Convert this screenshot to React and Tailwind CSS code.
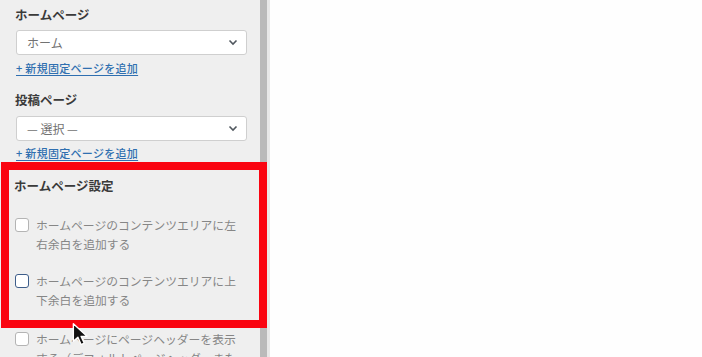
import React from 'react';

const jp = { fontFamily: '"Noto Sans CJK JP", "Noto Sans", sans-serif' };

function Chevron() {
  return (
    <svg width="10" height="7" viewBox="0 0 10 7" className="shrink-0">
      <path d="M1.5 1.5 L5 5 L8.5 1.5" fill="none" stroke="#50575e" strokeWidth="1.6" />
    </svg>
  );
}

function Select({ value, className }) {
  return (
    <div className={`h-[25px] w-[231px] rounded-[3px] border border-[#cfcfcf] bg-white flex items-center justify-between pl-[10px] pr-[8px] ${className}`}>
      <span className="text-[12px] text-[#727272] leading-none">{value}</span>
      <Chevron />
    </div>
  );
}

function AddLink({ className }) {
  return (
    <div className={`h-[16px] text-[11px] leading-[16px] font-medium tracking-[0.3px] text-[#2f6fb0] underline underline-offset-2 ${className}`}>
      + 新規固定ページを追加
    </div>
  );
}

function Check({ focused, children, className }) {
  return (
    <div className={`flex items-start gap-[7px] ${className}`}>
      <div
        className={`mt-[3px] h-[14px] w-[14px] shrink-0 rounded-[3px] bg-white border ${
          focused ? 'border-[#3d5d8a] border-[1.5px]' : 'border-[#b4b4b4]'
        }`}
      />
      <p className="w-[211px] text-[11.8px] leading-[19px] text-[#868686]">{children}</p>
    </div>
  );
}

export default function App() {
  return (
    <div className="relative flex h-[357px] w-[702px] overflow-hidden bg-[#fefefe]" style={jp}>
      <div className="w-[260px] shrink-0 bg-[#efefef] pl-[16px] pt-[6px]">
        <h3 className="h-[18px] text-[12.5px] leading-[18px] font-bold text-[#3a3a3a] -ml-[1px]">ホームページ</h3>
        <Select value="ホーム" className="mt-[6px]" />
        <AddLink className="mt-[5px]" />

        <h3 className="mt-[15px] h-[18px] text-[12.5px] leading-[18px] font-bold text-[#3a3a3a] -ml-[1px]">投稿ページ</h3>
        <Select value="— 選択 —" className="mt-[7px]" />
        <AddLink className="mt-[4px]" />

        <h3 className="mt-[16px] h-[18px] text-[12.5px] leading-[18px] font-bold text-[#3a3a3a] -ml-[2px]">ホームページ設定</h3>
        <Check className="mt-[20px] -ml-[1px]">ホームページのコンテンツエリアに左右余白を追加する</Check>
        <Check focused className="mt-[18px] -ml-[1px]">ホームページのコンテンツエリアに上下余白を追加する</Check>
        <Check className="mt-[20px] -ml-[1px]">ホームページにページヘッダーを表示する（デフォルトページヘッダーまたはカスタムヘッダー）</Check>
      </div>
      <div className="w-[7px] shrink-0 bg-[#bababa]" />
      <div className="w-[3px] shrink-0 bg-[#e8e8e8]" />
      <div className="flex-1" />

      {/* annotation frame */}
      <div className="pointer-events-none absolute left-[1px] top-[162px] h-[166px] w-[266px] border-[8px] border-[#fa0410]" />

      {/* mouse cursor */}
      <svg className="absolute left-[72px] top-[322px]" width="20" height="26" viewBox="0 0 22 28">
        <path
          d="M1.5 1.5 L1.5 21 L6.5 16.5 L10 24.5 L13.5 23 L10 15.5 L16.5 15.5 Z"
          fill="#111"
          stroke="#fff"
          strokeWidth="1.5"
          strokeLinejoin="round"
        />
      </svg>
    </div>
  );
}
